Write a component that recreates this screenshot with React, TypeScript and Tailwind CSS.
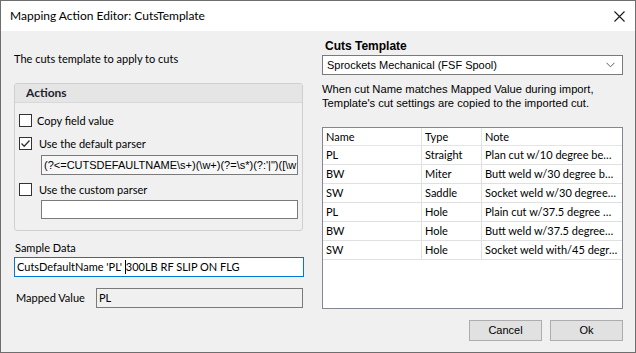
import React from 'react';

// Mapping Action Editor dialog (WinForms look)

const SEGOE = "font-['Lato','Liberation_Sans',sans-serif]";
const ARIAL = "font-['Liberation_Sans',Arial,sans-serif]";

const Check: React.FC<{ checked?: boolean }> = ({ checked }) => (
  <span className="flex h-[13px] w-[13px] shrink-0 items-center justify-center border border-[#333333] bg-white">
    {checked && (
      <svg width="11" height="11" viewBox="0 0 11 11" aria-hidden="true">
        <path d="M1.5 5.5 L4.2 8.2 L9.5 2.5" fill="none" stroke="#333333" strokeWidth="1.3" />
      </svg>
    )}
  </span>
);

const rows = [
  ['PL', 'Straight', 'Plan cut w/10 degree be…'],
  ['BW', 'Miter', 'Butt weld w/30 degree b…'],
  ['SW', 'Saddle', 'Socket weld w/30 degree…'],
  ['PL', 'Hole', 'Plain cut w/37.5 degree …'],
  ['BW', 'Hole', 'Butt weld w/37.5 degree…'],
  ['SW', 'Hole', 'Socket weld with/45 degr…'],
];

export default function App() {
  return (
    <div className={`flex h-[353px] w-[636px] flex-col border border-[#6e6e6e] bg-[#f0f0f0] text-[11px] text-black ${SEGOE}`}>
      {/* title bar */}
      <div className="flex h-[30px] shrink-0 items-center justify-between bg-white pl-[9px] pr-[10px]">
        <span className="text-[12px]">Mapping Action Editor: CutsTemplate</span>
        <svg width="11" height="11" viewBox="0 0 11 11" aria-hidden="true">
          <path d="M0.5 0.5 L10.5 10.5 M10.5 0.5 L0.5 10.5" stroke="#1a1a1a" strokeWidth="1.1" />
        </svg>
      </div>

      <div className="flex flex-1">
        {/* left column */}
        <div className="ml-[13px] flex w-[290px] flex-col">
          <p className="mt-[20px] leading-[15px]">The cuts template to apply to cuts</p>

          <div className="mt-[17px] h-[148px] w-[289px] rounded-[3px] border border-[#cfcfcf]">
            <div className="flex h-[19px] items-center rounded-t-[2px] border-b border-[#d9d9d9] bg-[#e5e5e5] pl-[11px] text-[12px] font-bold text-[#1e1e2e]">
              Actions
            </div>
            <div className="flex flex-col pl-[4px]">
              <label className="mt-[11px] flex items-center gap-[5px] leading-[13px]">
                <Check /> Copy field value
              </label>
              <label className="mt-[10px] flex items-center gap-[7px] leading-[13px]">
                <Check checked /> Use the default parser
              </label>
              <div className={`ml-[22px] mt-[5px] h-[20px] w-[257px] overflow-hidden whitespace-nowrap border border-[#7a7a7a] bg-[#f7f7f7] pl-[2px] leading-[18px] ${ARIAL}`}>
                {'(?<=CUTSDEFAULTNAME\\s+)(\\w+)(?=\\s*)(?:\'|")([\\w'}
              </div>
              <label className="mt-[8px] flex items-center gap-[7px] leading-[13px]">
                <Check /> Use the custom parser
              </label>
              <div className="ml-[22px] mt-[4px] h-[19px] w-[257px] border border-[#7a7a7a] bg-white" />
            </div>
          </div>

          <p className="mt-[10px] pl-[1px] leading-[14px]">Sample Data</p>
          <div className="mt-[2px] flex h-[20px] w-[290px] items-center border border-[#0078d7] bg-white pl-[2px]">
            <span className="whitespace-nowrap">{"CutsDefaultName 'PL'\u00a0"}</span>
            <span className="h-[14px] w-px bg-black" />
            <span className="whitespace-nowrap">300LB RF SLIP ON FLG</span>
          </div>

          <div className="mt-[11px] flex items-center">
            <span className="w-[82px] shrink-0 pl-[2px]">Mapped Value</span>
            <div className="flex h-[20px] w-[207px] items-center border border-[#7a7a7a] bg-[#f0f0f0] pl-[2px]">PL</div>
          </div>
        </div>

        {/* right column */}
        <div className="ml-[18px] flex w-[301px] flex-col">
          <p className={`mt-[8px] pl-[3px] text-[12px] font-bold leading-[15px] ${ARIAL}`}>Cuts Template</p>
          <div className={`mt-[1px] flex h-[20px] items-center justify-between border border-[#7a7a7a] bg-white pl-[4px] pr-[7px] ${ARIAL}`}>
            <span>Sprockets Mechanical (FSF Spool)</span>
            <svg width="9" height="6" viewBox="0 0 9 6" aria-hidden="true">
              <path d="M0.5 0.8 L4.5 4.8 L8.5 0.8" fill="none" stroke="#606060" strokeWidth="1" />
            </svg>
          </div>
          <p className={`mt-[7px] text-[11.2px] leading-[14px] ${ARIAL}`}>
            When cut Name matches Mapped Value during import,
            <br />
            Template's cut settings are copied to the imported cut.
          </p>

          <div className="mt-[17px] h-[182px] overflow-hidden border border-[#828790] bg-white">
            <div className="flex h-[18px] border-b border-[#e5e5e5]">
              <span className="w-[99px] shrink-0 border-r border-[#e5e5e5] pl-[3px] leading-[17px]">Name</span>
              <span className="w-[60px] shrink-0 border-r border-[#e5e5e5] pl-[3px] leading-[17px]">Type</span>
              <span className="min-w-0 flex-1 pl-[3px] leading-[17px]">Note</span>
            </div>
            {rows.map((r, i) => (
              <div key={i} className="flex h-[19px] border-b border-[#e0e0e0]">
                <span className="w-[99px] shrink-0 border-r border-[#e0e0e0] pl-[3px] leading-[18px]">{r[0]}</span>
                <span className="w-[60px] shrink-0 border-r border-[#e0e0e0] pl-[3px] leading-[18px]">{r[1]}</span>
                <span className="min-w-0 flex-1 overflow-hidden whitespace-nowrap pl-[3px] leading-[18px]">{r[2]}</span>
              </div>
            ))}
          </div>

          <div className={`mt-[11px] flex justify-end gap-[8px] ${ARIAL}`}>
            <button className="h-[21px] w-[73px] border border-[#adadad] bg-[#e1e1e1]">Cancel</button>
            <button className="h-[21px] w-[73px] border border-[#adadad] bg-[#e1e1e1]">Ok</button>
          </div>
        </div>
      </div>
    </div>
  );
}
